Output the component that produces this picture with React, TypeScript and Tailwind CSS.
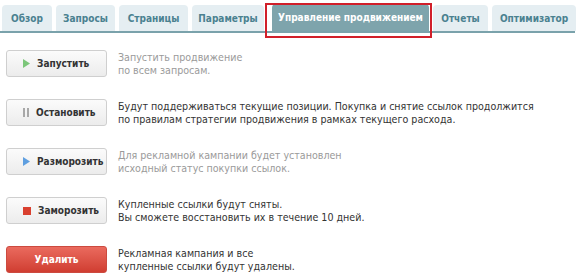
import React from "react";

const tabs = [
  { label: "Обзор", w: 50 },
  { label: "Запросы", w: 59 },
  { label: "Страницы", w: 69 },
  { label: "Параметры", w: 72 },
  { label: "Управление продвижением", w: 157, active: true },
  { label: "Отчеты", w: 55 },
  { label: "Оптимизатор", w: 84 },
];

function Icon({ kind }: { kind: string }) {
  if (kind === "play")
    return (
      <svg width="7" height="9" viewBox="0 0 7 9" className="shrink-0">
        <path d="M0 0 L7 4.5 L0 9 Z" fill="#7cc67a" />
      </svg>
    );
  if (kind === "playblue")
    return (
      <svg width="7" height="9" viewBox="0 0 7 9" className="shrink-0">
        <path d="M0 0 L7 4.5 L0 9 Z" fill="#5f9fe0" />
      </svg>
    );
  if (kind === "pause")
    return (
      <svg width="6" height="9" viewBox="0 0 6 9" className="shrink-0">
        <rect x="0" y="0" width="2" height="9" fill="#a8a8a8" />
        <rect x="4" y="0" width="2" height="9" fill="#a8a8a8" />
      </svg>
    );
  return (
    <svg width="8" height="8" viewBox="0 0 8 8" className="shrink-0">
      <rect x="0" y="0" width="8" height="8" fill="#d9402f" />
    </svg>
  );
}

const rows = [
  { label: "Запустить", icon: "play", muted: true, lines: ["Запустить продвижение", "по всем запросам."] },
  {
    label: "Остановить",
    icon: "pause",
    muted: false,
    lines: [
      "Будут поддерживаться текущие позиции. Покупка и снятие ссылок продолжится",
      "по правилам стратегии продвижения в рамках текущего расхода.",
    ],
  },
  {
    label: "Разморозить",
    icon: "playblue",
    muted: true,
    lines: ["Для рекламной кампании будет установлен", "исходный статус покупки ссылок."],
  },
  {
    label: "Заморозить",
    icon: "stop",
    muted: false,
    lines: ["Купленные ссылки будут сняты.", "Вы сможете восстановить их в течение 10 дней."],
  },
  { label: "Удалить", icon: "", danger: true, muted: false, lines: ["Рекламная кампания и все", "купленные ссылки будут удалены."] },
];

export default function App() {
  return (
    <div
      className="relative w-[578px] h-[277px] bg-white overflow-hidden"
      style={{ fontFamily: "Tahoma, 'DejaVu Sans Condensed', 'DejaVu Sans', sans-serif" }}
    >
      <div className="flex items-end gap-[4px] pl-[2px] pt-[5px] w-[575px] border-b-2 border-[#7aa2ab] h-[33px]">
        {tabs.map((t) =>
          t.active ? (
            <div
              key={t.label}
              className="flex items-center justify-center h-[27px] rounded-t-[4px] bg-[#7ea4ac] text-white text-[10px] font-bold shrink-0 ml-[4px]"
              style={{ width: t.w }}
            >
              {t.label}
            </div>
          ) : (
            <div
              key={t.label}
              className="flex items-center justify-center h-[26px] rounded-t-[4px] bg-[#e5eef2] text-[#4a8190] text-[10px] font-bold shrink-0"
              style={{ width: t.w }}
            >
              {t.label}
            </div>
          )
        )}
      </div>
      <div className="absolute left-[265px] top-[3px] w-[167px] h-[35px] border-2 border-[#d11f2a]" />

      <div className="flex flex-col pt-[6px]">
        {rows.map((r) => (
          <div key={r.label} className="flex items-center h-[49px]">
            {r.danger ? (
              <div className="ml-[6px] w-[101px] h-[27px] rounded-[3px] border border-[#cc4a3f] bg-gradient-to-b from-[#ea6a5e] to-[#d03d31] flex items-center justify-center text-white text-[10px] font-bold shrink-0">
                {r.label}
              </div>
            ) : (
              <div className="ml-[6px] w-[101px] h-[27px] rounded-[3px] border border-[#cfcfcf] bg-gradient-to-b from-[#fbfbfb] to-[#ececec] flex items-center pl-[16px] gap-[7px] text-[#333] text-[10px] font-bold shrink-0">
                <Icon kind={r.icon} />
                <span>{r.label}</span>
              </div>
            )}
            <div
              className={
                "ml-[11px] text-[10.6px] leading-[13px] " + (r.muted ? "text-[#9a9a9a]" : "text-[#333333]")
              }
            >
              {r.lines.map((l) => (
                <div key={l} className="whitespace-nowrap">
                  {l}
                </div>
              ))}
            </div>
          </div>
        ))}
      </div>
    </div>
  );
}
